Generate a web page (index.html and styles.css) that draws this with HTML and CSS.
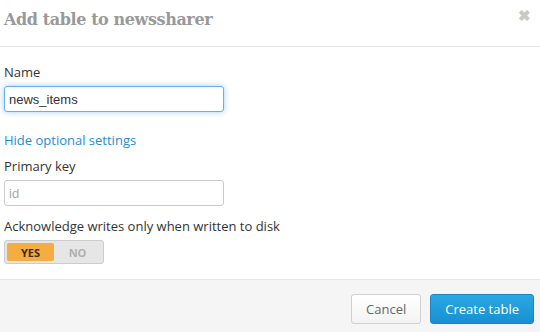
FILE: index.html
```html
<!DOCTYPE html>
<html lang="en">
<head>
    <meta charset="UTF-8">
    <title>Add table to newssharer</title>
    <link rel="stylesheet" href="styles.css">
</head>
<body>
    <div class="modal">
        <header class="modal-header">
            <h1>Add table to newssharer</h1>
            <span class="close">&#10006;</span>
        </header>

        <div class="modal-body">
            <div class="form-group">
                <label for="name">Name</label>
                <input type="text" id="name" class="focused" value="news_items">
            </div>

            <a href="#" class="toggle-link">Hide optional settings</a>

            <div class="form-group tight">
                <label for="pkey">Primary key</label>
                <input type="text" id="pkey" placeholder="id">
            </div>

            <div class="form-group">
                <label>Acknowledge writes only when written to disk</label>
                <div class="switch">
                    <span class="on">YES</span>
                    <span class="off">NO</span>
                </div>
            </div>
        </div>

        <footer class="modal-footer">
            <button class="btn">Cancel</button>
            <button class="btn btn-primary">Create table</button>
        </footer>
    </div>
</body>
</html>
```

FILE: styles.css
```css
:root {
    --text: #333333;
    --muted: #999999;
    --link: #1f8dd6;
    --border: #cccccc;
    --orange: #f5ad42;
}

* {
    box-sizing: border-box;
}

body {
    margin: 0;
    font-family: 'Open Sans', sans-serif;
    font-size: 13px;
    color: var(--text);
    background: #ffffff;
}

.modal {
    width: 540px;
    height: 332px;
    display: flex;
    flex-direction: column;
}

.modal-header {
    height: 47px;
    border-bottom: 1px solid #e5e5e5;
    display: flex;
    justify-content: space-between;
    padding: 0 9px 0 4px;
}

h1 {
    margin: 10px 0 0;
    font-family: 'DejaVu Serif', serif;
    font-size: 16px;
    font-weight: bold;
    color: var(--muted);
    letter-spacing: -0.4px;
}

.close {
    margin-top: 5px;
    font-size: 15px;
    color: #c8c8c8;
    font-weight: bold;
}

.modal-body {
    flex: 1;
    padding: 16px 4px 0;
    border-bottom: 1px solid #e5e5e5;
}

.form-group {
    margin-bottom: 14px;
}

.form-group.tight {
    margin-bottom: 11px;
}

label {
    display: block;
    line-height: 18px;
    margin-bottom: 5px;
}

input {
    width: 220px;
    height: 26px;
    padding: 0 4px;
    border: 1px solid var(--border);
    border-radius: 3px;
    font-family: 'Liberation Sans', Arial, sans-serif;
    font-size: 13px;
    color: var(--text);
    outline: none;
}

input::placeholder {
    color: #aaaaaa;
}

input.focused {
    border-color: #66afe9;
    box-shadow: 0 0 6px rgba(102, 175, 233, 0.6);
}

.toggle-link {
    display: block;
    color: var(--link);
    text-decoration: none;
    line-height: 18px;
    margin: 19px 0 8px;
}

.switch {
    display: flex;
    width: 100px;
    height: 24px;
    padding: 2px;
    background: #e6e6e6;
    border: 1px solid var(--border);
    border-radius: 3px;
    font-size: 11px;
    font-weight: bold;
}

.switch span {
    flex: 1;
    display: flex;
    align-items: center;
    justify-content: center;
}

.on {
    background: var(--orange);
    color: #3a2a10;
    border-radius: 2px;
}

.off {
    color: #b0b0b0;
}

.modal-footer {
    height: 52px;
    background: #f5f5f5;
    display: flex;
    justify-content: flex-end;
    align-items: flex-start;
    gap: 9px;
    padding: 14px 6px 0 0;
}

.btn {
    height: 30px;
    padding: 0 14px;
    font-family: inherit;
    font-size: 13px;
    color: #666666;
    background: linear-gradient(#ffffff, #f3f3f3);
    border: 1px solid #d0d0d0;
    border-radius: 3px;
    cursor: pointer;
}

.btn-primary {
    color: #ffffff;
    background: linear-gradient(#2aa8e2, #1690d3);
    border-color: #1c86c5;
}
```
